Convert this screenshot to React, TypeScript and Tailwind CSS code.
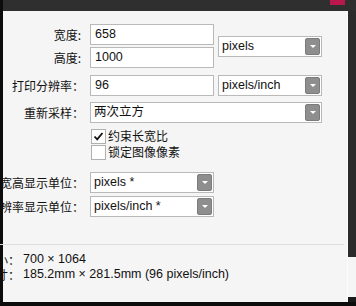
const latin = "font-['Liberation_Sans','Noto_Sans_CJK_SC',sans-serif]";
const cjk = "font-['Noto_Sans_CJK_SC','Liberation_Sans',sans-serif]";

function Arrow() {
  return (
    <div className="w-[15px] h-[17px] shrink-0 rounded-[2px] border border-[#7c7c7c] bg-[#8e8e8e] flex items-center justify-center">
      <div className="w-0 h-0 border-l-[3px] border-r-[3px] border-t-[3px] border-l-transparent border-r-transparent border-t-white" />
    </div>
  );
}

function Select({ value, className }: { value: string; className: string }) {
  return (
    <div className={`${className} h-[21px] border border-[#b9b9b9] bg-white flex items-center pl-[3px] pr-[1px]`}>
      <span className={`flex-1 text-[12.5px] text-[#111] ${latin}`}>{value}</span>
      <Arrow />
    </div>
  );
}

function Input({ value }: { value: string }) {
  return (
    <div className="w-[124px] h-[21px] border border-[#b9b9b9] bg-white flex items-center pl-[4px]">
      <span className={`text-[12.5px] text-[#111] ${latin}`}>{value}</span>
    </div>
  );
}

function Label({ text, pr = "pr-0" }: { text: string; pr?: string }) {
  return (
    <div className={`w-[81px] shrink-0 flex justify-end whitespace-nowrap ${pr}`}>
      <span className={`text-[12px] text-[#111] ${cjk}`}>{text}</span>
    </div>
  );
}

function Check({ checked, text }: { checked: boolean; text: string }) {
  return (
    <div className="flex items-center h-[16px] pl-[88px] gap-[2px]">
      <div className="w-[15px] h-[15px] border border-[#b0b0b0] bg-white flex items-center justify-center">
        {checked && (
          <svg width="11" height="11" viewBox="0 0 11 11">
            <path d="M1.5 5.5 L4.2 8.3 L9.5 2" fill="none" stroke="#111" strokeWidth="1.8" />
          </svg>
        )}
      </div>
      <span className={`text-[12px] text-[#111] ${cjk}`}>{text}</span>
    </div>
  );
}

export default function App() {
  return (
    <div className="w-[356px] h-[306px] overflow-hidden bg-black flex flex-col">
      <div className="h-[11px] shrink-0 flex bg-[#2f2f2f]">
        <div className="w-[3px] bg-[#0c0c0c]" />
        <div className="flex-1" />
        <div className="w-[15px] h-[5px] bg-[#b8184c] mr-[11px]" />
      </div>

      <div className="flex flex-1">
        <div className="w-[3px] bg-[#0c0c0c]" />

        <div className="flex-1 bg-[#f5f5f5] border-r border-[#fbfbfb] pt-[13px]">
          <div className="flex items-center">
            <div className="flex flex-col gap-[2px]">
              <div className="flex items-center">
                <Label text="宽度:" pr="pr-[3px]" />
                <div className="ml-[6px]"><Input value="658" /></div>
              </div>
              <div className="flex items-center">
                <Label text="高度:" pr="pr-[3px]" />
                <div className="ml-[6px]"><Input value="1000" /></div>
              </div>
            </div>
            <Select value="pixels" className="w-[104px] ml-[4px]" />
          </div>

          <div className="flex items-center mt-[7px]">
            <Label text="打印分辨率：" />
            <div className="ml-[6px]"><Input value="96" /></div>
            <Select value="pixels/inch" className="w-[104px] ml-[4px]" />
          </div>

          <div className="flex items-center mt-[6px]">
            <Label text="重新采样：" />
            <Select value="两次立方" className={`w-[232px] ml-[6px]`} />
          </div>

          <div className="mt-[5px]">
            <Check checked text="约束长宽比" />
            <Check checked={false} text="锁定图像像素" />
          </div>

          <div className="flex items-center mt-[12px]">
            <Label text="宽高显示单位：" />
            <Select value="pixels *" className="w-[124px] ml-[6px]" />
          </div>
          <div className="flex items-center mt-[3px]">
            <Label text="分辨率显示单位：" />
            <Select value="pixels/inch *" className="w-[124px] ml-[6px]" />
          </div>

          <div className="mt-[27px] mr-[3px] ml-[-3px] border-t border-[#dedede]" />

          <div className="mt-[7px] flex flex-col gap-0">
            <div className="flex items-center h-[15px]">
              <div className="w-[17px] shrink-0 flex justify-end whitespace-nowrap">
                <span className={`text-[12px] text-[#111] ${cjk}`}>大小：</span>
              </div>
              <span className={`ml-[3px] text-[12.5px] text-[#111] ${latin}`}>700 × 1064</span>
            </div>
            <div className="flex items-center h-[15px]">
              <div className="w-[17px] shrink-0 flex justify-end whitespace-nowrap">
                <span className={`text-[12px] text-[#111] ${cjk}`}>尺寸：</span>
              </div>
              <span className={`ml-[3px] text-[12.5px] text-[#111] ${latin}`}>185.2mm × 281.5mm (96 pixels/inch)</span>
            </div>
          </div>
        </div>

        <div className="w-[8px] flex flex-col">
          <div className="h-[246px] bg-[#2b2b2b]" />
          <div className="flex-1 bg-[#f5f5f5]" />
          <div className="h-[5px] bg-[#1a1a1a]" />
        </div>
      </div>

      <div className="h-[4px] shrink-0 bg-[#0c0c0c]" />
    </div>
  );
}
